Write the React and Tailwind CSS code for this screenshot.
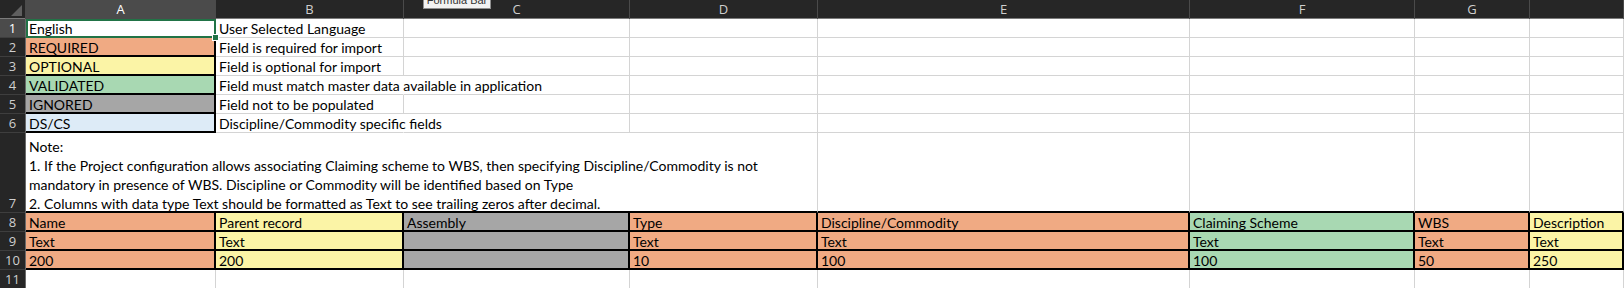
const cols = ['A', 'B', 'C', 'D', 'E', 'F', 'G', ''];

const ORANGE = 'bg-[#f0aa83]';
const YELLOW = 'bg-[#fbf4a6]';
const GREEN = 'bg-[#a8d8b2]';
const GRAY = 'bg-[#a6a6a6]';
const BLUE = 'bg-[#ddebf7]';

const legend = [
  { key: 'English', desc: 'User Selected Language', bg: 'bg-white', selected: true },
  { key: 'REQUIRED', desc: 'Field is required for import', bg: ORANGE },
  { key: 'OPTIONAL', desc: 'Field is optional for import', bg: YELLOW },
  { key: 'VALIDATED', desc: 'Field must match master data available in application', bg: GREEN, spill: true },
  { key: 'IGNORED', desc: 'Field not to be populated', bg: GRAY },
  { key: 'DS/CS', desc: 'Discipline/Commodity specific fields', bg: BLUE, spill: true },
];

const fields = [
  { name: 'Name', type: 'Text', len: '200', bg: ORANGE },
  { name: 'Parent record', type: 'Text', len: '200', bg: YELLOW },
  { name: 'Assembly', type: '', len: '', bg: GRAY },
  { name: 'Type', type: 'Text', len: '10', bg: ORANGE },
  { name: 'Discipline/Commodity', type: 'Text', len: '100', bg: ORANGE },
  { name: 'Claiming Scheme', type: 'Text', len: '100', bg: GREEN },
  { name: 'WBS', type: 'Text', len: '50', bg: ORANGE },
  { name: 'Description', type: 'Text', len: '250', bg: YELLOW },
];

const colTemplate = 'grid grid-cols-[26px_190px_188px_226px_188px_372px_225px_115px_1fr]';
const gridCols = `${colTemplate} grid-rows-[19px] h-[19px]`;

function RowNum({ n, active, tall }) {
  return (
    <div
      className={`flex justify-center h-full border-r border-b border-r-[#6a6a6a] border-b-[#3e3e3e] font-['Open_Sans',sans-serif] text-[13px] leading-[18px] ${
        tall ? 'items-end' : 'items-center'
      } ${active ? 'bg-[#4b4b4b] text-white' : 'bg-[#262626] text-[#cfcfcf]'}`}
    >
      {n}
    </div>
  );
}

function Cell({ children, className = 'border-r-[#d4d4d4]' }) {
  return (
    <div className={`h-full flex items-end whitespace-nowrap pl-[3px] leading-[16px] border-r border-b border-b-[#d4d4d4] ${className}`}>
      {children}
    </div>
  );
}

function BoxCell({ children, bg }) {
  return (
    <div className={`h-full flex items-end whitespace-nowrap pl-[3px] leading-[15px] border-r-2 border-b-2 border-black ${bg}`}>
      {children}
    </div>
  );
}

export default function App() {
  return (
    <div className="relative w-[1624px] h-[288px] overflow-hidden bg-white font-['Lato',sans-serif] text-[14px] text-black">
      {/* column headers */}
      <div className={`${gridCols} bg-[#262626] border-b border-[#7b7b7b]`}>
        <div className="relative border-r border-[#4a4a4a]">
          <div className="absolute right-[3px] bottom-[3px] w-0 h-0 border-l-[11px] border-l-transparent border-b-[11px] border-b-[#5f5f5f]" />
        </div>
        {cols.map((c, i) => (
          <div
            key={i}
            className={`flex items-center justify-center border-r border-[#4a4a4a] font-['Open_Sans',sans-serif] text-[13px] ${
              i === 0 ? 'bg-[#4b4b4b] text-white' : 'text-[#cfcfcf]'
            }`}
          >
            {c}
          </div>
        ))}
      </div>

      {/* legend rows */}
      {legend.map((row, r) => (
        <div key={r} className={gridCols}>
          <RowNum n={r + 1} active={row.selected} />
          {row.selected ? (
            <div className="relative z-10 h-full flex items-end pl-[1px] leading-[14px] border-2 border-[#217346] bg-white">
              {row.key}
              <div className="absolute -right-[5px] -bottom-[5px] w-[7px] h-[7px] bg-[#217346] border border-white" />
            </div>
          ) : (
            <BoxCell bg={row.bg}>{row.key}</BoxCell>
          )}
          <Cell className={row.spill ? 'border-r-transparent' : 'border-r-[#d4d4d4]'}>{row.desc}</Cell>
          <Cell />
          <Cell />
          <Cell />
          <Cell />
          <Cell />
          <Cell />
        </div>
      ))}

      {/* note row */}
      <div className={`${colTemplate} h-[80px]`}>
        <RowNum n={7} tall />
        <div className="col-span-4 flex flex-col justify-end pl-[3px] leading-[19px] border-r border-r-[#d4d4d4] border-b-2 border-b-black whitespace-nowrap">
          <div className="-mb-[2px]">
            <div>Note:</div>
            <div>1. If the Project configuration allows associating Claiming scheme to WBS, then specifying Discipline/Commodity is not</div>
            <div>mandatory in presence of WBS. Discipline or Commodity will be identified based on Type</div>
            <div>2. Columns with data type Text should be formatted as Text to see trailing zeros after decimal.</div>
          </div>
        </div>
        <div className="border-r border-r-[#d4d4d4] border-b-2 border-b-black" />
        <div className="border-r border-r-[#d4d4d4] border-b-2 border-b-black" />
        <div className="border-r border-r-[#d4d4d4] border-b-2 border-b-black" />
        <div className="border-r border-r-[#d4d4d4] border-b-2 border-b-black" />
      </div>

      {/* field rows */}
      {['name', 'type', 'len'].map((k, r) => (
        <div key={k} className={gridCols}>
          <RowNum n={r + 8} />
          {fields.map((f, i) => (
            <BoxCell key={i} bg={f.bg}>
              {f[k]}
            </BoxCell>
          ))}
        </div>
      ))}

      {/* empty row 11 */}
      <div className={gridCols}>
        <RowNum n={11} />
        {cols.map((c, i) => (
          <Cell key={i} />
        ))}
      </div>

      {/* formula bar tooltip */}
      <div className="absolute left-[423px] top-[-8px] h-[17px] w-[68px] flex items-center justify-center border border-[#8f8f8f] bg-[#f2f2f2] font-['Liberation_Sans',sans-serif] text-[11px] leading-[15px] whitespace-nowrap text-[#333]">
        Formula Bar
      </div>
    </div>
  );
}
